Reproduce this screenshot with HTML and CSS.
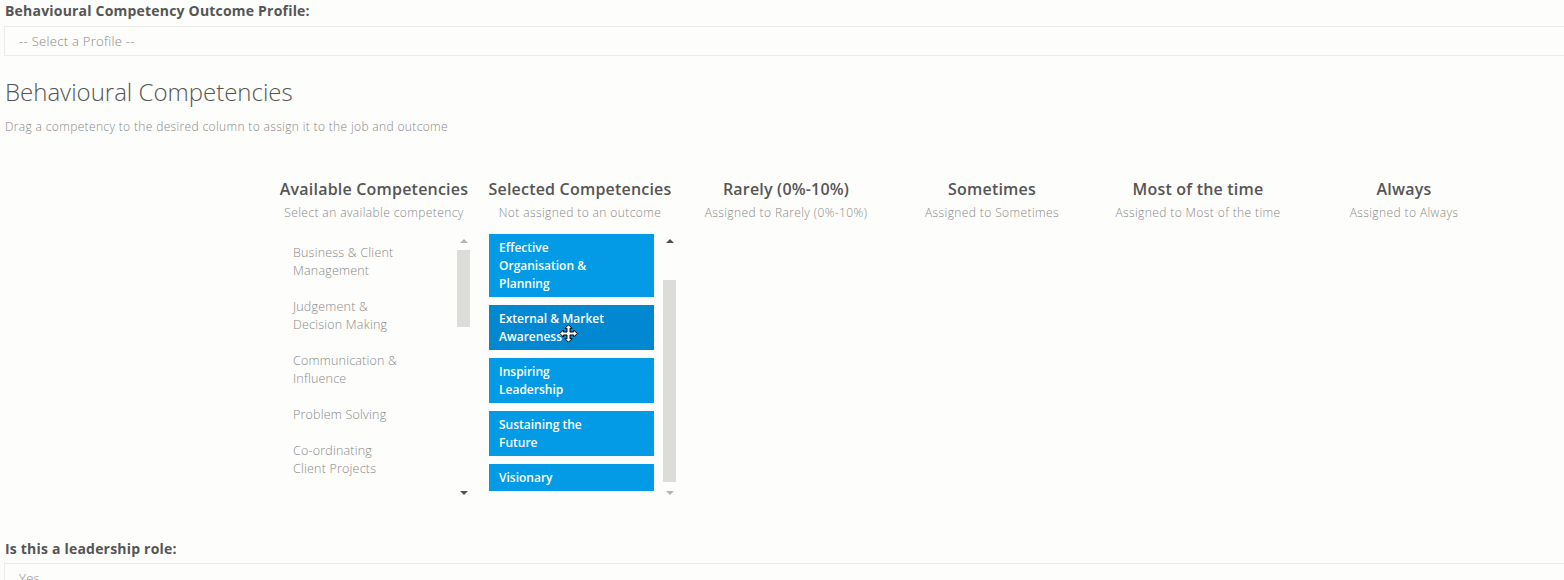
FILE: index.html
```html
<!DOCTYPE html>
<html lang="en">
<head>
<meta charset="utf-8">
<title>Behavioural Competencies</title>
<link rel="stylesheet" href="styles.css">
</head>
<body>
<div class="page">
  <div class="field">
    <label class="field-label">Behavioural Competency Outcome Profile:</label>
    <div class="select">-- Select a Profile --</div>
  </div>

  <h2 class="title">Behavioural Competencies</h2>
  <p class="desc">Drag a competency to the desired column to assign it to the job and outcome</p>

  <div class="board">
    <div class="col">
      <div class="col-title">Available Competencies</div>
      <div class="col-sub">Select an available competency</div>
      <div class="list">
        <div class="list-body">
          <div class="item">Business &amp; Client<br>Management</div>
          <div class="item">Judgement &amp;<br>Decision Making</div>
          <div class="item">Communication &amp;<br>Influence</div>
          <div class="item">Problem Solving</div>
          <div class="item">Co-ordinating<br>Client Projects</div>
          <div class="item">Creating<br>Value</div>
        </div>
        <div class="sbar">
          <div class="arrow up off"></div>
          <div class="track"><div class="thumb thumb-a"></div></div>
          <div class="arrow down"></div>
        </div>
      </div>
    </div>

    <div class="col">
      <div class="col-title">Selected Competencies</div>
      <div class="col-sub">Not assigned to an outcome</div>
      <div class="list">
        <div class="list-body">
          <div class="card">Effective<br>Organisation &amp;<br>Planning</div>
          <div class="card hover">External &amp; Market<br>Awareness
            <svg class="cursor" width="19" height="19" viewBox="0 0 19 19"><path d="M9.5 0.8 L13 4.3 L11 4.3 L11 8 L14.7 8 L14.7 6 L18.2 9.5 L14.7 13 L14.7 11 L11 11 L11 14.7 L13 14.7 L9.5 18.2 L6 14.7 L8 14.7 L8 11 L4.3 11 L4.3 13 L0.8 9.5 L4.3 6 L4.3 8 L8 8 L8 4.3 L6 4.3 Z" fill="#fff" stroke="#000" stroke-width="1" stroke-linejoin="miter"/></svg>
          </div>
          <div class="card">Inspiring<br>Leadership</div>
          <div class="card">Sustaining the<br>Future</div>
          <div class="card">Visionary</div>
        </div>
        <div class="sbar">
          <div class="arrow up"></div>
          <div class="track"><div class="thumb thumb-s"></div></div>
          <div class="arrow down off"></div>
        </div>
      </div>
    </div>

    <div class="col">
      <div class="col-title">Rarely (0%-10%)</div>
      <div class="col-sub">Assigned to Rarely (0%-10%)</div>
    </div>
    <div class="col">
      <div class="col-title">Sometimes</div>
      <div class="col-sub">Assigned to Sometimes</div>
    </div>
    <div class="col">
      <div class="col-title">Most of the time</div>
      <div class="col-sub">Assigned to Most of the time</div>
    </div>
    <div class="col">
      <div class="col-title">Always</div>
      <div class="col-sub">Assigned to Always</div>
    </div>
  </div>

  <div class="field field-bottom">
    <label class="field-label">Is this a leadership role:</label>
    <div class="select">Yes</div>
  </div>
</div>
</body>
</html>
```

FILE: styles.css
```css
html, body {
  margin: 0;
  padding: 0;
  background: #fdfdfb;
  overflow: hidden;
}
body {
  font-family: "Open Sans", "Liberation Sans", sans-serif;
  color: #555;
}
.page {
  padding: 3px 0 0 4px;
}
.field-label {
  display: block;
  padding-left: 1px;
  font-size: 14px;
  line-height: 16px;
  letter-spacing: 0.2px;
  font-weight: 700;
  color: #555;
}
.select {
  margin-top: 7px;
  margin-right: -20px;
  height: 28px;
  border: 1px solid #ebebe9;
  padding-left: 14px;
  font-size: 13px;
  line-height: 28px;
  letter-spacing: 0.3px;
  font-weight: 300;
  color: #888;
}
.field-bottom {
  margin-top: 41px;
}
.field-bottom .select {
  margin-top: 6px;
}
.title {
  margin: 23px 0 0 1px;
  font-size: 24px;
  line-height: 26px;
  font-weight: 300;
  color: #555;
}
.desc {
  margin: 15px 0 0 1px;
  font-size: 12px;
  line-height: 14px;
  letter-spacing: 0.35px;
  font-weight: 300;
  color: #888;
}
.board {
  margin-top: 46px;
  padding-left: 267px;
  display: grid;
  grid-template-columns: repeat(6, 206px);
  height: 320px;
}
.col {
  display: flex;
  flex-direction: column;
  align-items: center;
}
.col-title {
  font-size: 16px;
  line-height: 18px;
  letter-spacing: 0.2px;
  font-weight: 600;
  color: #555;
}
.col-sub {
  margin-top: 8px;
  font-size: 12px;
  line-height: 14px;
  letter-spacing: 0.4px;
  font-weight: 300;
  color: #8a8a8a;
}
.list {
  margin-top: 14px;
  align-self: flex-start;
  margin-left: 12px;
  height: 266px;
  display: flex;
  gap: 9px;
}
.list-body {
  width: 165px;
  overflow: hidden;
}
.item {
  padding: 10px 10px 8px;
  font-size: 12.5px;
  line-height: 18px;
  letter-spacing: 0.2px;
  font-weight: 300;
  color: #8a8a8a;
}
.card {
  position: relative;
  margin-bottom: 8px;
  padding: 5px 10px 4px;
  background: #039be5;
  color: #fff;
  font-size: 12px;
  line-height: 18px;
  font-weight: 600;
}
.card.hover {
  background: #0288d1;
}
.cursor {
  position: absolute;
  left: 70px;
  top: 19px;
}
.sbar {
  width: 13px;
  display: flex;
  flex-direction: column;
}
.arrow {
  height: 14px;
  display: flex;
  align-items: center;
  justify-content: center;
}
.arrow::before {
  content: "";
  width: 0;
  height: 0;
  border-left: 4px solid transparent;
  border-right: 4px solid transparent;
}
.arrow.up::before {
  border-bottom: 4px solid #505050;
}
.arrow.down::before {
  border-top: 4px solid #505050;
}
.arrow.up.off::before {
  border-bottom-color: #b4b4b4;
}
.arrow.down.off::before {
  border-top-color: #b4b4b4;
}
.track {
  flex: 1;
  display: flex;
  flex-direction: column;
}
.thumb {
  background: #dcdcd8;
}
.thumb-a {
  margin-top: 2px;
  height: 77px;
}
.thumb-s {
  margin-top: 32px;
  height: 202px;
}
```
